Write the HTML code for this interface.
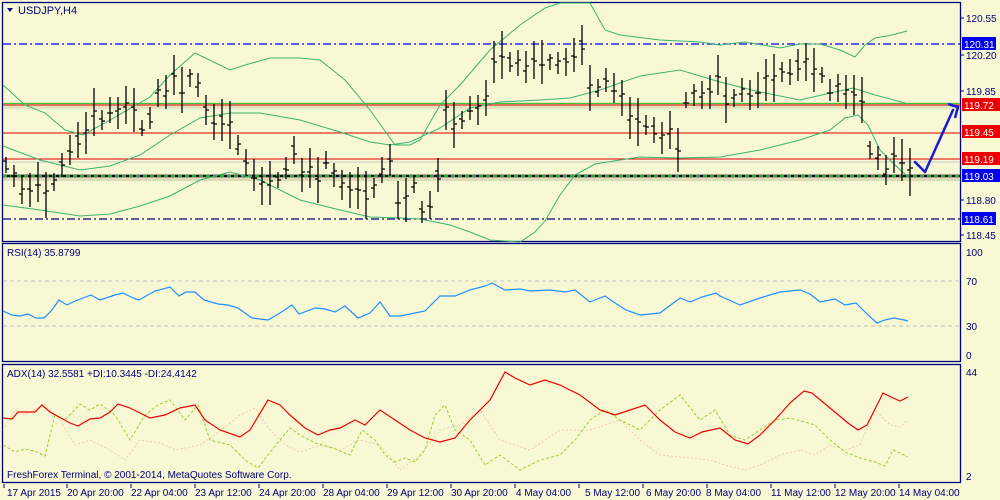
<!DOCTYPE html>
<html><head><meta charset="utf-8"><style>
html,body{margin:0;padding:0;background:#f8f8d4;}
svg{display:block;font-family:"Liberation Sans",sans-serif;}
</style></head><body>
<svg id="s" width="1000" height="500" viewBox="0 0 1000 500" xmlns="http://www.w3.org/2000/svg">
<rect width="1000" height="500" fill="#f8f8d4"/>
<g fill="none" stroke="#000080" stroke-width="1.3">
<rect x="2.5" y="2.5" width="958" height="239"/>
<rect x="2.5" y="243.5" width="958" height="118"/>
<rect x="2.5" y="364.5" width="958" height="118"/>
</g>
<line x1="3" y1="44" x2="960" y2="44" stroke="#0000ff" stroke-width="1.2" stroke-dasharray="8,3,2,3"/>
<line x1="3" y1="219" x2="960" y2="219" stroke="#000080" stroke-width="1.2" stroke-dasharray="8,3,2,3"/>
<rect x="3" y="102" width="957" height="7" fill="#d0d0a8" opacity="0.5"/>
<line x1="3" y1="103.5" x2="960" y2="103.5" stroke="#33cc33" stroke-width="1"/>
<line x1="3" y1="105" x2="960" y2="105" stroke="#e00000" stroke-width="1"/>
<line x1="3" y1="133" x2="960" y2="133" stroke="#e00000" stroke-width="1"/>
<line x1="3" y1="159" x2="960" y2="159" stroke="#e00000" stroke-width="1"/>
<line x1="3" y1="162" x2="960" y2="162" stroke="#c8c8c8" stroke-width="1"/>
<rect x="3" y="174" width="957" height="7" fill="#c0c098" opacity="0.5"/>
<line x1="3" y1="176" x2="960" y2="176" stroke="#000020" stroke-width="2.5"/>
<line x1="3" y1="176" x2="960" y2="176" stroke="#33ee33" stroke-width="1.5" stroke-dasharray="4,3"/>
<g fill="none" stroke="#3cb371" stroke-width="1">
<polyline points="3,85 25,105 45,113 65,130 83,135 110,120 150,97 170,75 195,53 230,70 245,65 270,58 300,58 320,60 345,80 370,110 395,145 410,145 420,140 440,105 460,85 490,50 520,25 545,8 560,3 590,3 605,30 620,35 660,40 700,42 720,45 745,42 780,48 800,44 820,44 840,50 855,57 865,45 875,38 892,35 907,31"/>
<polyline points="3,146 40,160 80,170 110,166 140,155 170,135 200,118 230,113 260,113 300,120 340,132 370,142 390,145 410,142 440,128 470,108 500,102 540,100 570,98 600,90 640,76 680,70 720,82 760,92 800,100 835,92 853,88 875,95 905,103"/>
<polyline points="3,205 40,210 80,216 110,214 140,206 170,196 200,180 230,172 260,180 300,200 340,210 370,217 400,218 420,219 450,225 470,232 490,240 520,242 535,232 545,221 560,195 575,175 595,164 620,160 640,157 680,158 720,157 760,150 800,140 830,130 845,118 858,115 868,125 880,150 895,165 907,176"/>
</g>
<g id="bars" stroke="#000" stroke-width="1.3" fill="none"></g>
<path d="M915,162 L925,172 L953,110" fill="none" stroke="#1a1ad0" stroke-width="2.5" stroke-linecap="round" stroke-linejoin="round"/>
<path d="M948,104 L958,107 L955,118" fill="none" stroke="#1a1ad0" stroke-width="2.5" stroke-linejoin="round"/>
<path d="M7,8 L13,8 L10,12 Z" fill="#000080"/>
<text x="18" y="14" font-size="11" fill="#000080">USDJPY,H4</text>
<line x1="3" y1="281" x2="960" y2="281" stroke="#c0c0c0" stroke-dasharray="4,3"/>
<line x1="3" y1="326" x2="960" y2="326" stroke="#c0c0c0" stroke-dasharray="4,3"/>
<text x="7" y="256" font-size="10" fill="#000080">RSI(14) 35.8799</text>
<polyline fill="none" stroke="#1e90ff" stroke-width="1.2" points="3,311 12,315 20,316 28,314 36,318 44,318 52,310 59,300 67,305 75,301 91,295 100,300 115,295 123,293 133,298 139,300 155,291 170,287 179,296 186,292 195,292 204,300 218,304 228,305 238,308 252,318 268,320 280,313 292,305 299,314 315,308 325,309 335,312 345,306 358,318 370,313 380,302 390,316 400,316 410,314 425,311 440,296 455,296 470,290 485,286 492,283 505,290 520,289 530,291 550,290 565,292 575,290 590,302 605,296 615,303 626,310 640,315 660,313 680,298 690,302 702,297 716,293 720,296 740,305 760,298 780,292 790,291 800,290 810,294 820,302 835,299 845,305 856,303 868,315 877,323 885,320 894,318 904,320 908,321"/>
<text x="7" y="377" font-size="10" fill="#000080">ADX(14) 32.5581 +DI:10.3445 -DI:24.4142</text>
<polyline fill="none" stroke="#f5c8a8" stroke-width="1" stroke-dasharray="2,2" points="3,430 15,410 25,415 45,404 60,420 75,445 90,440 110,450 125,460 140,440 160,443 175,450 200,445 215,435 240,415 255,408 270,430 285,445 300,452 320,445 340,450 360,440 380,445 400,470 420,455 440,430 460,425 480,410 500,440 530,450 560,430 590,430 620,420 640,440 660,455 690,458 710,460 725,465 745,470 760,465 780,455 800,450 815,455 830,445 845,450 860,445 875,410 890,425 900,427 908,420"/>
<polyline fill="none" stroke="#9acd32" stroke-width="1" stroke-dasharray="3,2" points="3,445 15,452 25,449 35,451 45,456 55,415 65,420 80,404 90,410 100,404 115,415 130,440 145,415 158,405 170,400 185,420 198,405 210,440 230,445 245,460 258,468 268,455 280,440 290,428 300,435 315,443 330,447 350,455 362,430 375,440 385,455 395,462 405,458 415,462 425,450 435,415 445,405 455,430 470,440 485,465 500,455 520,470 540,460 560,455 575,440 590,420 605,410 620,420 640,430 660,410 680,395 700,420 715,410 730,435 745,440 760,430 775,420 790,418 805,422 815,425 830,440 845,452 860,458 875,462 885,466 893,450 900,453 908,457"/>
<polyline fill="none" stroke="#ee0000" stroke-width="1.2" points="3,418 12,419 18,412 35,412 42,405 50,412 70,423 78,426 90,419 100,418 110,412 118,404 130,408 150,418 165,415 180,408 195,405 205,420 220,430 240,437 250,430 268,400 280,405 290,415 305,428 318,435 330,430 340,428 355,420 365,425 380,410 395,420 410,430 425,438 440,442 455,438 470,420 490,400 505,372 515,378 530,385 545,380 560,385 580,395 600,410 615,415 630,410 645,405 660,420 675,432 690,438 702,432 720,428 735,440 748,444 760,435 775,420 790,403 804,391 812,393 830,408 848,423 858,430 867,425 883,393 893,398 900,401 908,397"/>
<text x="7" y="478" font-size="10" fill="#000080">FreshForex Terminal, © 2001-2014, MetaQuotes Software Corp.</text>
<g font-size="10" fill="#000080">
<text x="966" y="22">120.55</text>
<text x="966" y="59">120.20</text>
<text x="966" y="95">119.85</text>
<text x="966" y="204">118.80</text>
<text x="966" y="239">118.45</text>
<text x="966" y="256">100</text>
<text x="966" y="285">70</text>
<text x="966" y="330">30</text>
<text x="966" y="359">0</text>
<text x="966" y="376">44</text>
<text x="966" y="480">2</text>
</g>
<g font-size="10">
<rect x="962" y="37" width="34" height="13" fill="#0000ee"/><text x="964" y="48" fill="#fff">120.31</text>
<rect x="962" y="98" width="38" height="13" fill="#ee0000"/><text x="964" y="109" fill="#fff">119.72</text>
<rect x="962" y="125" width="38" height="13" fill="#ee0000"/><text x="964" y="136" fill="#fff">119.45</text>
<rect x="962" y="152" width="38" height="13" fill="#ee0000"/><text x="964" y="163" fill="#fff">119.19</text>
<rect x="962" y="169" width="38" height="13" fill="#0000ee"/><text x="964" y="180" fill="#fff">119.03</text>
<rect x="962" y="212" width="34" height="13" fill="#0000ee"/><text x="964" y="223" fill="#fff">118.61</text>
</g>
<g stroke="#000080" stroke-width="1">
<line x1="961" y1="18" x2="964" y2="18"/><line x1="961" y1="55" x2="964" y2="55"/><line x1="961" y1="91" x2="964" y2="91"/><line x1="961" y1="200" x2="964" y2="200"/><line x1="961" y1="235" x2="964" y2="235"/>
</g>
<g font-size="10" fill="#000080">
<text x="7" y="496">17 Apr 2015</text>
<text x="67" y="496">20 Apr 20:00</text>
<text x="131" y="496">22 Apr 04:00</text>
<text x="195" y="496">23 Apr 12:00</text>
<text x="259" y="496">24 Apr 20:00</text>
<text x="323" y="496">28 Apr 04:00</text>
<text x="387" y="496">29 Apr 12:00</text>
<text x="451" y="496">30 Apr 20:00</text>
<text x="516" y="496">4 May 04:00</text>
<text x="585" y="496">5 May 12:00</text>
<text x="646" y="496">6 May 20:00</text>
<text x="706" y="496">8 May 04:00</text>
<text x="771" y="496">11 May 12:00</text>
<text x="835" y="496">12 May 20:00</text>
<text x="899" y="496">14 May 04:00</text>
</g>
<g stroke="#000080"><line x1="4" y1="484" x2="4" y2="488"/><line x1="67" y1="484" x2="67" y2="488"/><line x1="131" y1="484" x2="131" y2="488"/><line x1="195" y1="484" x2="195" y2="488"/><line x1="259" y1="484" x2="259" y2="488"/><line x1="323" y1="484" x2="323" y2="488"/><line x1="387" y1="484" x2="387" y2="488"/><line x1="451" y1="484" x2="451" y2="488"/><line x1="515" y1="484" x2="515" y2="488"/><line x1="579" y1="484" x2="579" y2="488"/><line x1="643" y1="484" x2="643" y2="488"/><line x1="707" y1="484" x2="707" y2="488"/><line x1="771" y1="484" x2="771" y2="488"/><line x1="835" y1="484" x2="835" y2="488"/><line x1="899" y1="484" x2="899" y2="488"/></g>
</svg>
<script>
(function(){
var k=[[4,165],[12,176],[20,190],[28,190],[36,182],[44,195],[52,182],[60,165],[68,150],[76,140],[84,133],[92,112],[100,120],[108,110],[116,113],[124,105],[132,110],[140,128],[148,118],[156,93],[164,92],[172,75],[180,90],[188,78],[196,85],[204,110],[212,122],[220,120],[228,125],[236,145],[244,162],[252,175],[260,186],[268,183],[276,180],[284,168],[292,150],[300,175],[308,168],[316,180],[324,160],[332,175],[340,185],[348,190],[356,188],[364,195],[372,188],[380,170],[388,160],[396,200],[404,200],[412,185],[420,212],[428,205],[436,175],[444,110],[452,125],[460,120],[468,108],[476,110],[484,98],[492,62],[500,55],[508,62],[516,63],[524,67],[532,60],[540,62],[548,62],[556,63],[564,62],[572,55],[580,45],[588,88],[596,88],[604,80],[612,88],[620,98],[628,118],[636,122],[644,125],[652,130],[660,138],[668,130],[676,150],[684,100],[692,95],[700,95],[708,92],[716,75],[724,100],[732,98],[740,90],[748,95],[756,90],[764,80],[772,78],[780,72],[788,72],[796,65],[804,62],[812,70],[820,75],[828,90],[836,88],[844,92],[852,95],[860,100],[868,150],[876,158],[884,170],[892,155],[900,160],[908,172]];
var d="";
for(var i=0;i<k.length;i++){var x=k[i][0]+2,y=k[i][1],h=8+((i*37)%17);var o=y+((i*13)%9)-4,c=y-((i*7)%9)+4;
d+="M"+x+","+(y-h)+"V"+(y+h)+"M"+(x-3)+","+o+"H"+x+"M"+x+","+c+"H"+(x+3);}
var p=document.createElementNS("http://www.w3.org/2000/svg","path");p.setAttribute("d",d);document.getElementById("bars").appendChild(p);
})();
</script>
</body></html>
